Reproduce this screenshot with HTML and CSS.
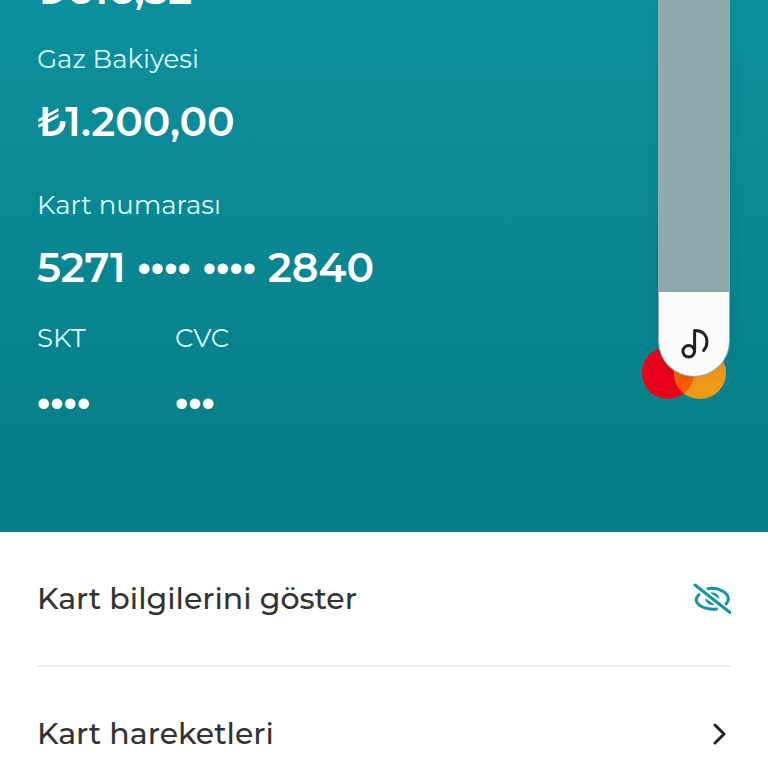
FILE: index.html
```
<!DOCTYPE html>
<html lang="tr">

<head>
  <meta charset="UTF-8">
  <meta name="viewport" content="width=device-width, initial-scale=1.0">
  <title>Kart</title>
  <link rel="stylesheet" href="styles.css">
</head>

<body>

  <main class="card">
    <p class="amount">₺616,52</p>

    <p class="label gas-label">Gaz Bakiyesi</p>
    <p class="amount">₺1.200,00</p>

    <p class="label number-label">Kart numarası</p>
    <p class="amount card-number">
      <span>5271</span>
      <span class="dots">••••</span>
      <span class="dots">••••</span>
      <span>2840</span>
    </p>

    <div class="card-footer">
      <div class="secret">
        <p class="label">SKT</p>
        <p class="amount"><span class="dots">••••</span></p>
      </div>
      <div class="secret">
        <p class="label">CVC</p>
        <p class="amount"><span class="dots">•••</span></p>
      </div>
      <svg class="brand" viewBox="0 0 89 52" role="img" aria-label="Mastercard">
        <circle cx="26" cy="26" r="26" fill="#eb001b" />
        <circle cx="58" cy="26" r="26" fill="#f09a1a" />
        <path d="M42 5.5a26 26 0 0 1 0 41a26 26 0 0 1 0-41z" fill="#fa5a05" />
      </svg>
    </div>
  </main>

  <!-- System volume overlay -->
  <div class="volume">
    <input class="volume-range" type="range" min="0" max="100" value="22" aria-label="Ses">
    <svg class="volume-icon" viewBox="0 0 28 32" aria-hidden="true">
      <circle cx="7.7" cy="23.3" r="5.8" />
      <path d="M13.6 23.3V2.4c8-.2 12.300 4.600 12.300 11.300c0 3.800-1.200 6.500-3.300 8.800" />
    </svg>
  </div>

  <nav class="menu">
    <button class="menu-item" type="button">
      <span>Kart bilgilerini göster</span>
      <svg class="eye" viewBox="0 0 38 32" aria-hidden="true">
        <path d="M15 5.700c10-1.700 19.500 3.500 20.300 9.300c.2 2.300-.6 4.300-2.300 6" />
        <path d="M6 11.700c-2.500 2.300-3.300 4.500-2.400 7c2.300 5 11 8.500 20 7.300" />
        <path class="pupil" d="M17 9.800c4-1.300 8.800 1.500 9.600 6.300z" />
        <path class="pupil" d="M12.300 15.200c-.2 4.500 4.500 7.700 9.300 6.600z" />
        <path d="M2 2l35 27.500" />
      </svg>
    </button>
    <a class="menu-item" href="#">
      <span>Kart hareketleri</span>
      <svg class="chevron" viewBox="0 0 16 24" aria-hidden="true">
        <path d="M3 3l9 9l-9 9" />
      </svg>
    </a>
  </nav>

</body>

</html>
```
FILE: styles.css
```
* {
  box-sizing: border-box;
}

body {
  position: relative;
  height: 100vh;
  margin: 0;
  overflow: hidden;
  background-color: #fff;
  color: #333;
  font-family: Montserrat, Inter, sans-serif;
}

p {
  margin: 0;
}

/* Card */
.card {
  /* Scrolled so the first balance is partly out of view */
  margin-top: -37px;
  padding: 0 37px 104px;
  background: linear-gradient(#0c919f, #067c84);
  color: #fff;
}

.label {
  color: #d9fbff;
  font-size: 26px;
  font-weight: 400;
  line-height: 32px;
}

.amount {
  font-size: 41px;
  font-weight: 600;
  line-height: 52px;
}

.gas-label {
  margin: 28px 0 20px;
}

.number-label {
  margin: 42px 0 20px;
}

.card-number {
  display: flex;
  align-items: baseline;
  gap: 12px;
}

.dots {
  font-family: "Liberation Sans", sans-serif;
  font-size: 38px;
  font-weight: 400;
  line-height: 1;
}

.card-footer {
  display: flex;
  margin-top: 29px;
}

.secret {
  width: 138px;
}

.secret .label {
  margin-bottom: 22px;
}

.brand {
  width: 89px;
  height: 52px;
  margin: 25px 0 0 auto;
}

/* Volume overlay */
.volume {
  position: absolute;
  top: 0;
  right: 38px;
  width: 72px;
  height: 377px;
}

.volume-range {
  display: block;
  width: 100%;
  height: 100%;
  margin: 0;
  border: 1px solid #8fa9ad;
  border-top: 0;
  border-radius: 0 0 36px 36px;
  background: linear-gradient(#91aaae 292px, #fcfcfc 292px);
  box-shadow: 0 0 12px rgba(0, 60, 70, 0.12);
  appearance: none;
  writing-mode: vertical-lr;
  direction: rtl;
}

.volume-range::-webkit-slider-thumb {
  width: 72px;
  height: 1px;
  appearance: none;
  background: transparent;
}

.volume-icon {
  position: absolute;
  bottom: 17px;
  left: 23px;
  width: 28px;
  height: 32px;
  fill: none;
  stroke: #222;
  stroke-width: 3;
  stroke-linecap: round;
  stroke-linejoin: round;
  pointer-events: none;
}

/* Menu */
.menu {
  padding: 0 37px;
}

.menu-item {
  display: flex;
  align-items: center;
  justify-content: space-between;
  width: 100%;
  height: 135px;
  padding: 0;
  border: 0;
  border-bottom: 2px solid #ececec;
  background: none;
  color: inherit;
  font: inherit;
  font-size: 30px;
  font-weight: 500;
  text-decoration: none;
  cursor: pointer;
}

.menu-item svg {
  fill: none;
  stroke-linecap: round;
  stroke-linejoin: round;
}

.eye {
  width: 38px;
  height: 32px;
  stroke: #1596a5;
  stroke-width: 3;
}

.menu-item .pupil {
  fill: #1596a5;
  stroke: none;
}

.chevron {
  width: 16px;
  height: 24px;
  margin-right: 3px;
  stroke: #222;
  stroke-width: 3;
}
```
